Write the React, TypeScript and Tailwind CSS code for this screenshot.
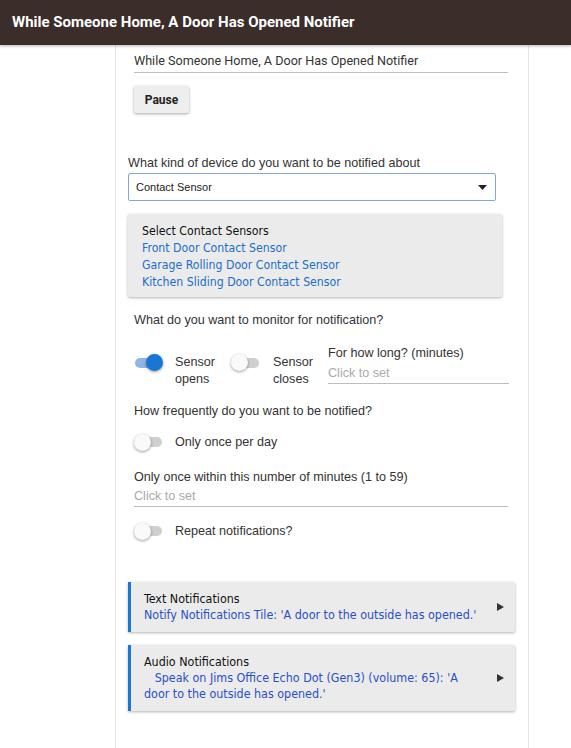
import React from 'react'

const tahoma = "font-['DejaVu_Sans_Condensed','Liberation_Sans',sans-serif]"
const arial = "font-['Liberation_Sans',Arial,sans-serif]"

function Toggle({ on }: { on?: boolean }) {
  return (
    <span className="relative block w-[29px] h-[17px] shrink-0">
      <span className={`absolute left-[1px] right-[1px] top-[3.5px] h-[10px] rounded-full ${on ? 'bg-[#8fb6e6]' : 'bg-[#cfcfcf]'}`} />
      <span
        className={`absolute top-0 w-[17px] h-[17px] rounded-full shadow-[0_1px_3px_rgba(0,0,0,0.4)] ${on ? 'right-0 bg-[#1976d2]' : 'left-0 bg-[#fafafa]'}`}
      />
    </span>
  )
}

function NotifCard({ title, lines }: { title: string; lines: React.ReactNode }) {
  return (
    <div className={`flex w-[387px] bg-[#ebebeb] border-l-[3px] border-[#1976d2] rounded-r-[2px] shadow-[0_1px_3px_rgba(0,0,0,0.3)] ${tahoma} text-[12.4px] leading-[16px]`}>
      <div className="flex-1 pl-[13px] pt-[9px] pb-[9px]">
        <p className="text-[#111]">{title}</p>
        <p className="text-[#2a50c6]">{lines}</p>
      </div>
      <div className="w-[30px] flex items-center justify-center">
        <svg width="7" height="8" viewBox="0 0 7 8"><polygon points="0,0 7,4 0,8" fill="#333" /></svg>
      </div>
    </div>
  )
}

export default function App() {
  return (
    <div className="min-h-screen bg-white font-['Roboto',sans-serif]">
      <header className="relative z-10 h-[45px] bg-[#3a2d2a] px-3 flex items-center shadow-[0_1px_3px_rgba(0,0,0,0.3)]">
        <h1 className="text-white text-[15px] font-bold">While Someone Home, A Door Has Opened Notifier</h1>
      </header>

      <div className="ml-[115px] w-[414px] min-h-[703px] border-x border-[#e4e4e4] px-3 pb-10">
        {/* Name */}
        <div className="px-[6px] -mt-[12px]">
          <label className="block text-[12px] leading-[14px] text-[#777]">Name this Notifier</label>
          <div className="mt-[6px] w-[374px] text-[12.6px] leading-[16px] text-[#333] pb-[3px] border-b border-[#bdbdbd]">
            While Someone Home, A Door Has Opened Notifier
          </div>
          <button className="mt-[13px] h-[27px] w-[55px] bg-[#eeeeee] rounded-[2px] text-[12px] font-bold text-[#222] shadow-[0_1px_3px_rgba(0,0,0,0.35)]">
            Pause
          </button>
        </div>

        {/* Device type */}
        <p className={`mt-[42px] text-[12.6px] leading-[16px] text-[#333] ${arial}`}>What kind of device do you want to be notified about</p>
        <div className={`mt-[2px] w-[368px] h-[28px] border border-[#86a6da] rounded-[2px] flex items-center justify-between pl-[7px] pr-[8px] ${arial} text-[11px] text-[#222]`}>
          <span>Contact Sensor</span>
          <svg width="9" height="5" viewBox="0 0 9 5"><polygon points="0,0 9,0 4.5,5" fill="#222" /></svg>
        </div>

        {/* Contact sensors */}
        <div className={`mt-[13px] w-[374px] bg-[#ebebeb] rounded-[2px] shadow-[0_1px_3px_rgba(0,0,0,0.3)] pl-[14px] pt-[9px] pb-[6px] ${tahoma} text-[12.2px] leading-[17px]`}>
          <p className="text-[#111]">Select Contact Sensors</p>
          <p className="text-[#1a6fc9]">Front Door Contact Sensor</p>
          <p className="text-[#1a6fc9]">Garage Rolling Door Contact Sensor</p>
          <p className="text-[#1a6fc9]">Kitchen Sliding Door Contact Sensor</p>
        </div>

        <div className={`px-[6px] ${arial} text-[12.6px] leading-[16px] text-[#333]`}>
          <p className="mt-[15px]">What do you want to monitor for notification?</p>

          <div className="mt-[17px] flex items-start">
            <div className="flex items-start pt-[9px]">
              <Toggle on />
              <span className="ml-[12px] w-[42px] leading-[17px]">Sensor opens</span>
            </div>
            <div className="ml-[14px] flex items-start pt-[9px]">
              <Toggle />
              <span className="ml-[13px] w-[42px] leading-[17px]">Sensor closes</span>
            </div>
            <div className="ml-[13px] w-[181px]">
              <p>For how long? (minutes)</p>
              <p className="mt-[4px] text-[#aaa] pb-[2px] border-b border-[#bdbdbd]">Click to set</p>
            </div>
          </div>

          <p className="mt-[15px]">How frequently do you want to be notified?</p>
          <div className="mt-[13px] flex items-center h-[20px]">
            <Toggle />
            <span className="ml-[12px]">Only once per day</span>
          </div>

          <p className="mt-[17px]">Only once within this number of minutes (1 to 59)</p>
          <p className="mt-[3px] w-[374px] text-[#aaa] pb-[2px] border-b border-[#bdbdbd]">Click to set</p>

          <div className="mt-[14px] flex items-center h-[20px]">
            <Toggle />
            <span className="ml-[12px]">Repeat notifications?</span>
          </div>
        </div>

        {/* Notifications */}
        <div className="mt-[41px]">
          <NotifCard title="Text Notifications" lines="Notify Notifications Tile: 'A door to the outside has opened.'" />
        </div>
        <div className="mt-[13px]">
          <NotifCard
            title="Audio Notifications"
            lines={<>{'\u00a0\u00a0\u00a0'}Speak on Jims Office Echo Dot (Gen3) (volume: 65): 'A door to the outside has opened.'</>}
          />
        </div>
      </div>
    </div>
  )
}
